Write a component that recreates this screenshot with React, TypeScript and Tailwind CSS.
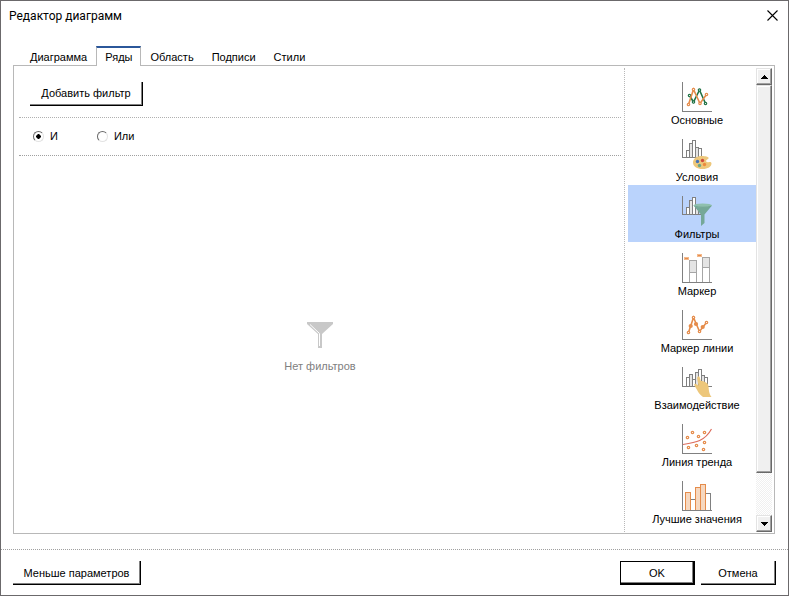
import React, { useState } from "react";

const GRAY = "#808080";
const ORANGE = "#e58c4b";

function Bars({ xs, ys, base }: { xs: number[]; ys: number[]; base: number }) {
  return (
    <g stroke={GRAY} shapeRendering="crispEdges">
      {ys.map((y, i) => (
        <rect key={i} x={xs[i]} y={y} width={xs[i + 1] - xs[i]} height={base - y} fill={i % 2 ? "#e4e4e4" : "#fff"} />
      ))}
    </g>
  );
}

function Dots({ points, color, fill = "#fff" }: { points: number[][]; color: string; fill?: string }) {
  return (
    <g stroke={color} strokeWidth="1.2" fill={fill}>
      {points.map(([x, y]) => (
        <circle key={`${x}-${y}`} cx={x} cy={y} r="1.2" />
      ))}
    </g>
  );
}

function Chart({ short = false, children }: { short?: boolean; children: React.ReactNode }) {
  return (
    <svg width="30" height="30" viewBox="0 0 30 30" fill="none" aria-hidden="true">
      <path d={short ? "M.5 0V18.5H20" : "M.5 0V29.5H30"} stroke={GRAY} shapeRendering="crispEdges" />
      {children}
    </svg>
  );
}

const items: { label: string; icon: React.ReactNode }[] = [
  {
    label: "Основные",
    icon: (
      <Chart>
        <path d="M7.5 13.5 11.5 20 17.5 8 23.5 21.5" stroke="#217346" strokeWidth="1.6" />
        <Dots color="#217346" points={[[7.5, 13.5], [11.5, 20], [17.5, 8], [23.5, 21.5]]} />
        <path d="M6.5 22.5 11.5 7.5 18 21.5 24.5 12.5" stroke={ORANGE} strokeWidth="1.6" />
        <Dots color={ORANGE} points={[[6.5, 22.5], [11.5, 7.5], [18, 21.5], [24.5, 12.5]]} />
      </Chart>
    ),
  },
  {
    label: "Условия",
    icon: (
      <Chart short>
        <Bars xs={[4.5, 7.5, 10.5, 13.5, 16.5, 19.5]} ys={[11.5, 4.5, 1.5, 8.5, 9.5]} base={18.5} />
        <path
          d="M20 17C14.5 17 11 19.7 11 23.5 11 27.5 15 30 20.5 30 26 30 29.5 27.5 29.5 24.5 29.5 23.3 28 22.8 26.5 23.2 24.5 23.7 23.5 22.3 24.5 21 25.5 20 26.7 20 26.7 19 26.5 17.8 23 17 20 17Z"
          fill="#edc77b"
        />
        <circle cx="15.5" cy="22.5" r="1.7" fill="#4472b8" />
        <circle cx="20.5" cy="21.5" r="1.7" fill="#d04a3c" />
        <circle cx="17.5" cy="26.5" r="1.7" fill="#6da58a" />
        <circle cx="22.5" cy="25.5" r="1.7" fill="#ec8a3c" />
      </Chart>
    ),
  },
  {
    label: "Фильтры",
    icon: (
      <Chart short>
        <Bars xs={[4.5, 7.5, 10.5, 13.5, 16.5]} ys={[11.5, 4.5, 1.5, 8.5]} base={18.5} />
        <path d="M11.5 9.5H30L22.5 18.5V27L19 30V18.5Z" fill="#75a898" />
        <ellipse cx="20.7" cy="9.5" rx="9.3" ry="2" fill="#8fc0ae" />
        <path d="M13 10.3C17 11.5 25 11.5 29 10.3" stroke="#649684" strokeWidth=".6" />
      </Chart>
    ),
  },
  {
    label: "Маркер",
    icon: (
      <Chart>
        <g shapeRendering="crispEdges">
          <g stroke="#a6a6a6">
            <path d="M7.5 7.5H14.5V19.5H7.5ZM20.5 4.5H27.5V14.5H20.5Z" fill="#e4e4e4" />
            <path d="M7.5 19.5H14.5V29H7.5ZM20.5 14.5H27.5V29H20.5Z" fill="#fff" />
          </g>
          <path d="M2 4H7V7H2ZM15 1H20V4H15Z" fill="#f4b98c" />
          <path d="M3 5.5H6M16 2.5H19" stroke={ORANGE} />
          <path d="M0 29.5H30" stroke={GRAY} />
        </g>
      </Chart>
    ),
  },
  {
    label: "Маркер линии",
    icon: (
      <Chart>
        <path d="M6.5 22.5 11.5 7.5 17.5 21.5 24.5 12.5" stroke={ORANGE} strokeWidth="1.6" />
        <Dots color={ORANGE} points={[[6.5, 22.5], [11.5, 7.5], [17.5, 21.5], [24.5, 12.5]]} />
        <g fill={ORANGE}>
          <circle cx="8.7" cy="16" r="2.1" />
          <circle cx="14" cy="14" r="2.1" />
          <circle cx="20.7" cy="17" r="2.1" />
        </g>
      </Chart>
    ),
  },
  {
    label: "Взаимодействие",
    icon: (
      <svg width="30" height="30" viewBox="0 0 30 30" fill="none" aria-hidden="true">
        <path d="M.5 0V19.5H30" stroke={GRAY} shapeRendering="crispEdges" />
        <Bars xs={[4.5, 7.5, 10.5, 13.5, 16.5, 19.5, 22.5, 25.5]} ys={[10.5, 7.5, 12.5, 5.5, 2.5, 8.5, 10.5]} base={19.5} />
        <path
          d="M16.5 9.3C15.3 9.5 15 11 15.3 12.5L16.5 18.5 13.5 16.8C12.3 16.5 12 17.5 12.5 18.5L16.5 25.5C18 28 20 29 21 30H29.5C26.5 26 27 22 26.3 18.5 26 16 22 14 18.8 14L17.8 10.5C17.5 9.6 17 9.2 16.5 9.3Z"
          fill="#edc77b"
        />
      </svg>
    ),
  },
  {
    label: "Линия тренда",
    icon: (
      <Chart>
        <path d="M1 20.5C14 18.5 23 17 29.5 5" stroke="#dc6c5c" strokeWidth="1.2" />
        <Dots
          color={ORANGE}
          points={[[5.5, 13.5], [10.5, 8.5], [16.5, 12.5], [22.5, 8.5], [6.5, 23.5], [14.5, 21.5], [22.5, 18.5], [21.5, 25.5]]}
        />
      </Chart>
    ),
  },
  {
    label: "Лучшие значения",
    icon: (
      <Chart>
        <g shapeRendering="crispEdges">
          <path d="M8.5 29V18.5H13.5V29M23.5 29V12.5H28.5V29" stroke={GRAY} fill="#fff" />
          <path d="M3.5 29.5V11.5H8.5V29.5M13.5 29.5V6.5H18.5V29.5M18.5 29.5V3.5H23.5V29.5" stroke={ORANGE} fill="#f6d8c0" />
          <path d="M0 29.5H30" stroke={GRAY} />
        </g>
      </Chart>
    ),
  },
];

const tabs = ["Диаграмма", "Ряды", "Область", "Подписи", "Стили"];

const raised = "h-6 shrink-0 border-r border-b border-black bg-white shadow-[inset_-1px_-1px_0_#808080]";

function Arrow({ up = false }: { up?: boolean }) {
  return (
    <button
      type="button"
      aria-label={up ? "Вверх" : "Вниз"}
      className="flex h-[17px] w-4 shrink-0 items-center justify-center border border-t-[#e3e3e3] border-r-[#696969] border-b-[#696969] border-l-[#e3e3e3] bg-[#f0f0f0] shadow-[inset_-1px_-1px_0_#a0a0a0,inset_1px_1px_0_#ffffff]"
    >
      <svg width="7" height="4" viewBox="0 0 7 4" shapeRendering="crispEdges" aria-hidden="true">
        <path d={up ? "M3 0H4V1H5V2H6V3H7V4H0V3H1V2H2V1H3Z" : "M0 0H7V1H6V2H5V3H4V4H3V3H2V2H1V1H0Z"} />
      </svg>
    </button>
  );
}

export default function App() {
  const [tab, setTab] = useState("Ряды");
  const [section, setSection] = useState("Фильтры");
  const [mode, setMode] = useState("И");

  return (
    <div className="flex h-screen flex-col border border-[#6b696b] bg-white font-['Liberation_Sans',Arial,sans-serif] text-[11px] leading-[14px] text-black">
      <header className="flex h-[45px] shrink-0 items-start justify-between px-2">
        <h1 className="pt-[7px] font-[Roboto,'Noto_Sans',sans-serif] text-[12px] leading-4">Редактор диаграмм</h1>
        <button type="button" aria-label="Закрыть" className="flex h-7 w-4 items-center justify-center">
          <svg width="11" height="11" viewBox="0 0 11 11" stroke="#000" strokeWidth="1.1" aria-hidden="true">
            <path d="M.5.5 10.5 10.5M10.5.5.5 10.5" />
          </svg>
        </button>
      </header>

      <nav role="tablist" className="relative -mb-px ml-5 flex h-5 shrink-0">
        {tabs.map((t) => (
          <button
            key={t}
            type="button"
            role="tab"
            aria-selected={t === tab}
            onClick={() => setTab(t)}
            className={`border-x px-2 pb-px ${
              t === tab ? "border-t-2 border-x-[#b8b8b8] border-t-[#2b579a] bg-white" : "border-transparent pt-0.5"
            }`}
          >
            {t}
          </button>
        ))}
      </nav>

      <main className="mr-[13px] ml-3 flex min-h-0 flex-1 border border-[#b8b8b8] px-0.5 pt-0.5 pb-px">
        <section className="flex min-w-0 flex-1 flex-col px-[3px]">
          <div className="flex h-[50px] shrink-0 items-center border-b border-dotted border-[#b0b0b0] pt-0.5 pl-[11px]">
            <button type="button" className={`${raised} w-[113px]`}>
              Добавить фильтр
            </button>
          </div>
          <div className="flex h-[38px] shrink-0 items-center gap-[39px] border-b border-dotted border-[#a0a0a0] pb-px pl-3.5">
            {["И", "Или"].map((m) => (
              <label key={m} className="flex items-center gap-1.5">
                <input
                  type="radio"
                  name="mode"
                  checked={m === mode}
                  onChange={() => setMode(m)}
                  className="size-[11px] appearance-none rounded-full border border-t-[#696969] border-r-[#e3e3e3] border-b-[#e3e3e3] border-l-[#696969] bg-white checked:bg-[radial-gradient(circle,#000_2px,transparent_2.5px)]"
                />
                {m}
              </label>
            ))}
          </div>
          <div className="flex flex-1 flex-col items-center justify-center gap-[11px] pt-1.5 text-[#808080]">
            <svg width="26" height="26" viewBox="0 0 26 26" aria-hidden="true">
              <path d="M0 0H26V2L15 12V26H11V12L0 2Z" fill="#c8c8c8" />
              <path d="M3 2.5 12.5 11.5V24" stroke="#fff" fill="none" />
            </svg>
            <p>Нет фильтров</p>
          </div>
        </section>

        <aside className="flex w-[148px] shrink-0 border-l border-dotted border-[#b8b8b8] pl-[3px]">
          <ul className="min-w-0 flex-1 overflow-hidden pt-[3px]">
            {items.map(({ label, icon }) => (
              <li key={label}>
                <button
                  type="button"
                  onClick={() => setSection(label)}
                  className={`flex h-[57px] w-full flex-col items-center gap-px pt-[11px] pl-2.5 whitespace-nowrap ${
                    section === label ? "bg-[#bad3fc]" : ""
                  }`}
                >
                  {icon}
                  <span>{label}</span>
                </button>
              </li>
            ))}
          </ul>
          <div className="flex w-4 shrink-0 flex-col bg-[repeating-conic-gradient(#f0f0f0_0_25%,#ffffff_0_50%)] bg-size-[2px_2px]">
            <Arrow up />
            <div className="min-h-0 flex-[388] border border-t-[#e3e3e3] border-r-[#696969] border-b-[#696969] border-l-[#e3e3e3] bg-[#f0f0f0] shadow-[inset_-1px_-1px_0_#a0a0a0,inset_1px_1px_0_#ffffff]" />
            <div className="flex-[42]" />
            <Arrow />
          </div>
        </aside>
      </main>

      <footer className="mt-[15px] flex h-[46px] shrink-0 items-start gap-1.5 border-t border-dotted border-[#a0a0a0] px-3 pt-[11px]">
        <button type="button" className={`${raised} mr-auto w-32`}>
          Меньше параметров
        </button>
        <button
          type="button"
          className="h-6 w-[75px] border border-r-2 border-b-2 border-black bg-white shadow-[inset_-1px_-1px_0_#808080]"
        >
          OK
        </button>
        <button type="button" className={`${raised} w-[75px]`}>
          Отмена
        </button>
      </footer>
    </div>
  );
}
